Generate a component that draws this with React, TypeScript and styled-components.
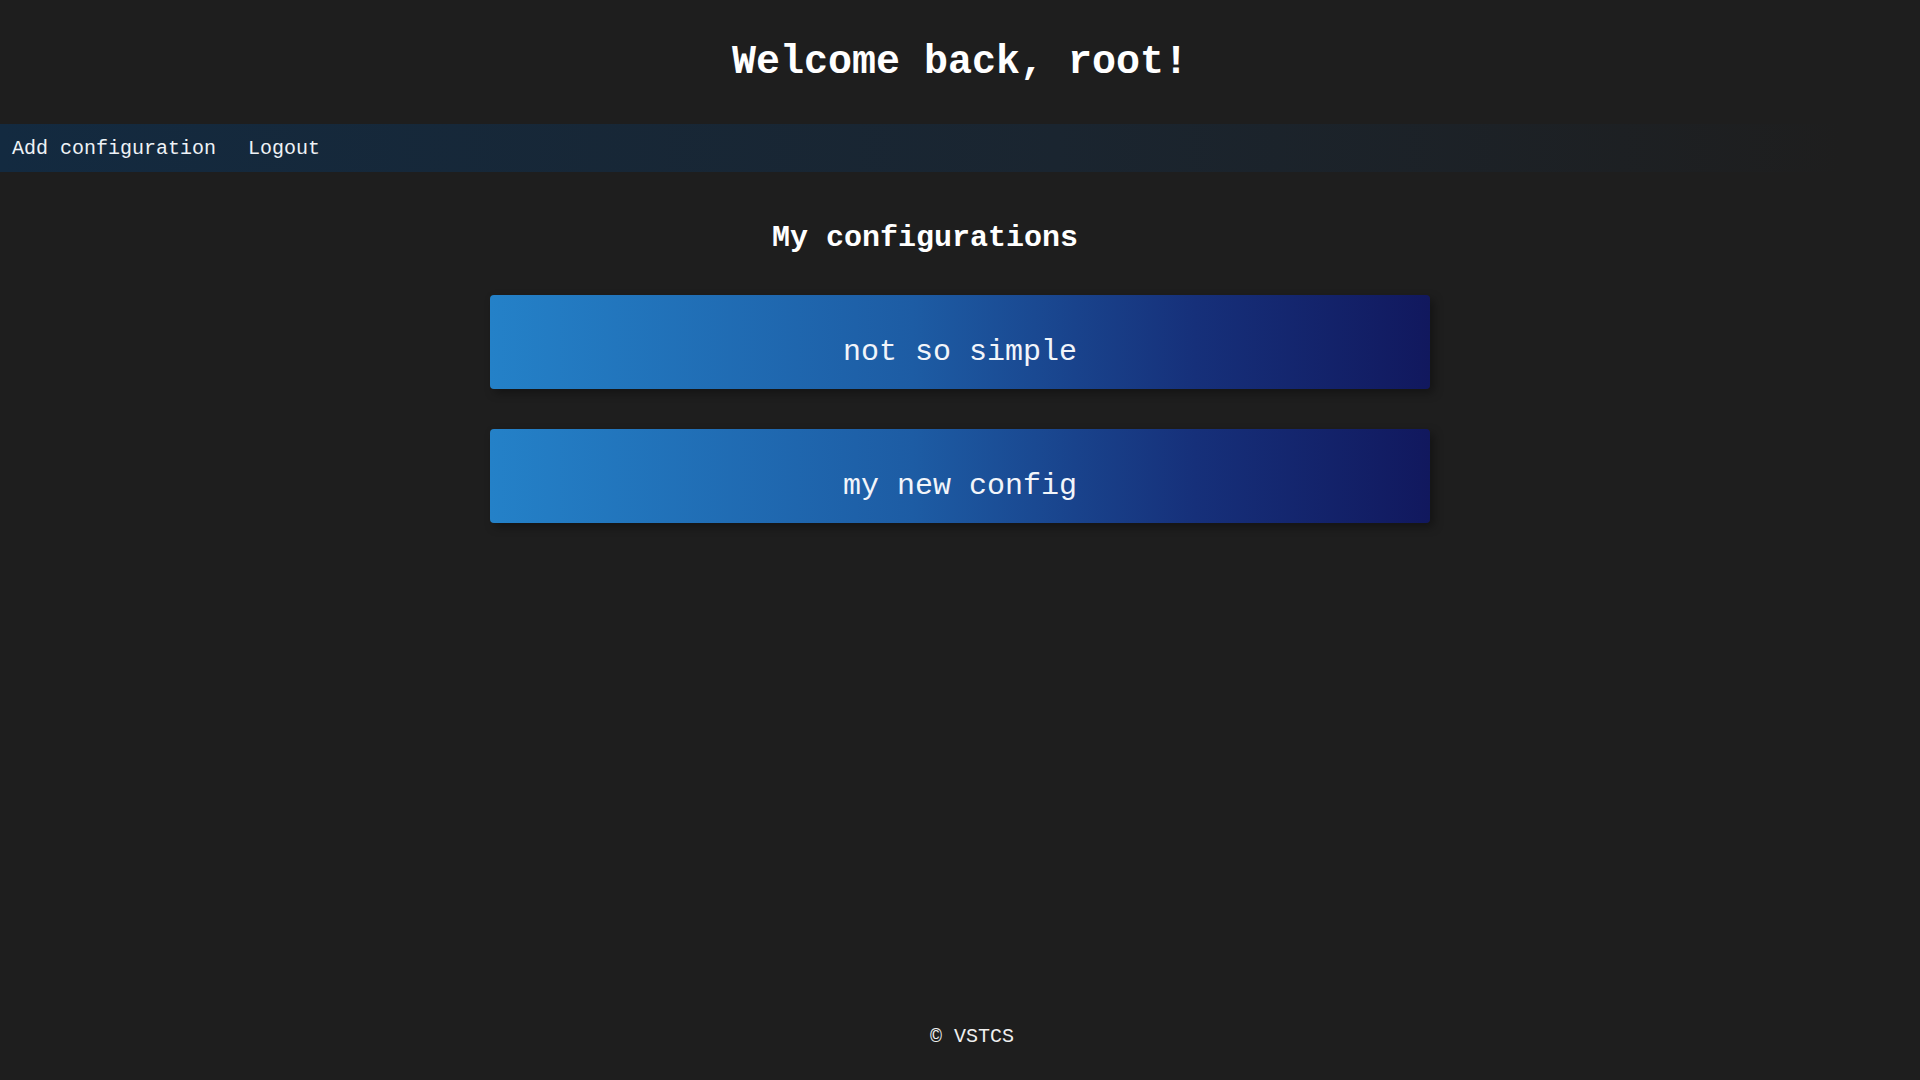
import React from "react";
import styled, { createGlobalStyle } from "styled-components";

const GlobalStyle = createGlobalStyle`
  html, body { margin: 0; padding: 0; background: #1e1e1e; }
  body { font-family: "Liberation Mono", "Courier New", monospace; color: #ffffff; }
  * { box-sizing: border-box; }
`;

const Page = styled.div`
  min-height: 100vh;
  display: flex;
  flex-direction: column;
  background: #1e1e1e;
`;

const Header = styled.header`
  height: 124px;
  padding-top: 40px;
  display: flex;
  justify-content: center;
`;

const Title = styled.h1`
  margin: 0;
  font-size: 40px;
  font-weight: bold;
  line-height: normal;
  color: #ffffff;
`;

const Nav = styled.nav`
  height: 48px;
  display: flex;
  align-items: center;
  gap: 32px;
  padding-left: 12px;
  background: linear-gradient(to right, #132a40 0%, #1a2530 55%, rgba(30, 30, 30, 0) 96%);
`;

const NavLink = styled.a`
  font-size: 20px;
  color: #eef2f6;
  text-decoration: none;
  cursor: pointer;
`;

const Main = styled.main`
  display: flex;
  flex-direction: column;
  align-items: center;
  padding-top: 49px;
`;

const SectionTitle = styled.h2`
  margin: 0 0 40px;
  padding-right: 70px;
  font-size: 30px;
  font-weight: bold;
  line-height: normal;
  color: #ffffff;
`;

const CardList = styled.div`
  display: flex;
  flex-direction: column;
  gap: 40px;
  width: 940px;
`;

const Card = styled.div`
  height: 94px;
  border-radius: 4px;
  padding-top: 40px;
  text-align: center;
  background: linear-gradient(to right, #2481c8 0%, #1d5ca4 45%, #16307a 75%, #11185e 100%);
  box-shadow: 4px 4px 10px rgba(0, 0, 0, 0.35);
  cursor: pointer;
`;

const CardLabel = styled.span`
  font-size: 30px;
  line-height: normal;
  color: #f2f5fa;
`;

const Footer = styled.footer`
  margin-top: auto;
  padding: 0 0 32px 24px;
  text-align: center;
  font-size: 20px;
  line-height: normal;
  color: #f0f0f0;
`;

const configs = ["not so simple", "my new config"];

export default function App() {
  return (
    <Page>
      <GlobalStyle />
      <Header>
        <Title>Welcome back, root!</Title>
      </Header>
      <Nav>
        <NavLink>Add configuration</NavLink>
        <NavLink>Logout</NavLink>
      </Nav>
      <Main>
        <SectionTitle>My configurations</SectionTitle>
        <CardList>
          {configs.map((c) => (
            <Card key={c}>
              <CardLabel>{c}</CardLabel>
            </Card>
          ))}
        </CardList>
      </Main>
      <Footer>© VSTCS</Footer>
    </Page>
  );
}
